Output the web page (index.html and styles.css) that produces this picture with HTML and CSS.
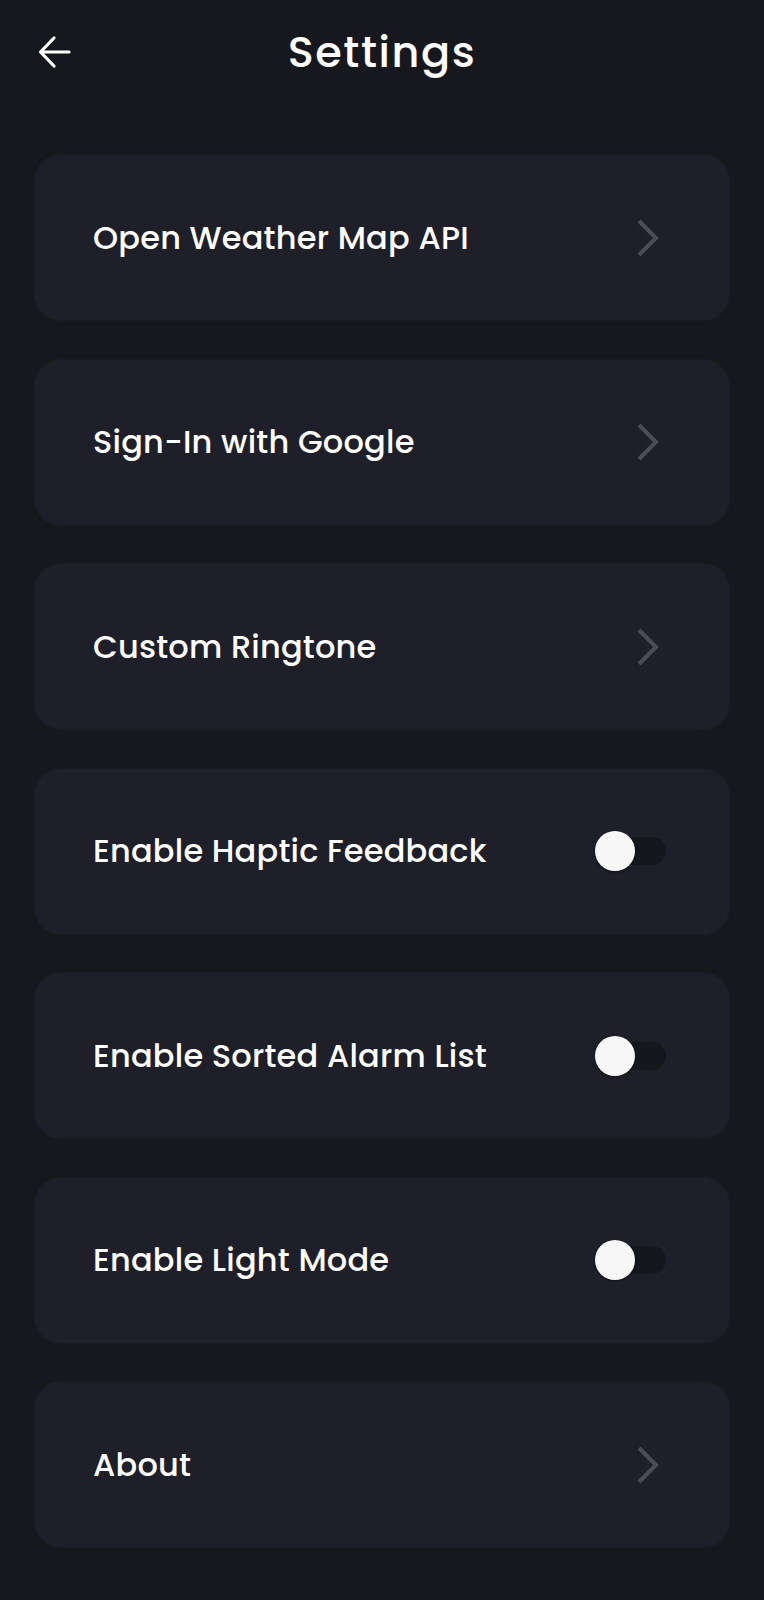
FILE: index.html
```html
<!DOCTYPE html>
<html>
<head>
<meta charset="utf-8">
<link rel="stylesheet" href="styles.css">
</head>
<body>
<div class="page">
  <header class="header">
    <button class="back" aria-label="Back">
      <svg width="34" height="34" viewBox="0 0 34 34"><path d="M32 17H4M17 3L3.5 17L17 31" fill="none" stroke="#fff" stroke-width="3.2" stroke-linecap="round" stroke-linejoin="round"/></svg>
    </button>
    <h1 class="title">Settings</h1>
  </header>
  <main class="list">
    <div class="card"><span class="label">Open Weather Map API</span><span class="chev"><svg width="24" height="38" viewBox="0 0 24 38"><path d="M3 2L20 19L3 36" fill="none" stroke="#4b4d56" stroke-width="4"/></svg></span></div>
    <div class="card"><span class="label">Sign-In with Google</span><span class="chev"><svg width="24" height="38" viewBox="0 0 24 38"><path d="M3 2L20 19L3 36" fill="none" stroke="#4b4d56" stroke-width="4"/></svg></span></div>
    <div class="card"><span class="label">Custom Ringtone</span><span class="chev"><svg width="24" height="38" viewBox="0 0 24 38"><path d="M3 2L20 19L3 36" fill="none" stroke="#4b4d56" stroke-width="4"/></svg></span></div>
    <div class="card"><span class="label">Enable Haptic Feedback</span><span class="toggle"><span class="knob"></span></span></div>
    <div class="card"><span class="label">Enable Sorted Alarm List</span><span class="toggle"><span class="knob"></span></span></div>
    <div class="card"><span class="label">Enable Light Mode</span><span class="toggle"><span class="knob"></span></span></div>
    <div class="card"><span class="label">About</span><span class="chev"><svg width="24" height="38" viewBox="0 0 24 38"><path d="M3 2L20 19L3 36" fill="none" stroke="#4b4d56" stroke-width="4"/></svg></span></div>
  </main>
</div>
</body>
</html>
```
FILE: styles.css
```css
html, body {
  margin: 0;
  padding: 0;
  background: #17181d;
}
body {
  font-family: "Poppins", "Open Sans", "DejaVu Sans", sans-serif;
  color: #ffffff;
}
.page {
  width: 764px;
  min-height: 1600px;
}
.header {
  height: 102px;
  display: flex;
  align-items: center;
  justify-content: center;
  position: relative;
}
.back {
  position: absolute;
  left: 37px;
  top: 35px;
  width: 34px;
  height: 34px;
  padding: 0;
  border: 0;
  background: transparent;
  display: flex;
}
.title {
  margin: 0;
  font-size: 43px;
  font-weight: 500;
  letter-spacing: 1.6px;
  line-height: 1;
  padding-top: 2px;
}
.list {
  padding: 53px 35px 0;
  display: flex;
  flex-direction: column;
  gap: 39.5px;
}
.card {
  height: 165px;
  border-radius: 26px;
  background: #1e1f28;
  box-shadow: 0 0 3px rgba(40, 40, 46, 0.8);
  display: flex;
  align-items: center;
  justify-content: space-between;
  padding: 0 68px 0 58px;
  box-sizing: border-box;
}
.label {
  font-size: 32px;
  font-weight: 500;
  letter-spacing: 0.2px;
}
.chev {
  display: flex;
  margin-right: 1px;
}
.toggle {
  position: relative;
  width: 68px;
  height: 28px;
  border-radius: 14px;
  background: #16171c;
  margin-right: -5px;
}
.knob {
  position: absolute;
  left: -3px;
  top: -6px;
  width: 40px;
  height: 40px;
  border-radius: 50%;
  background: #f7f7f8;
  box-shadow: 0 1px 3px rgba(0, 0, 0, 0.45);
}
```
